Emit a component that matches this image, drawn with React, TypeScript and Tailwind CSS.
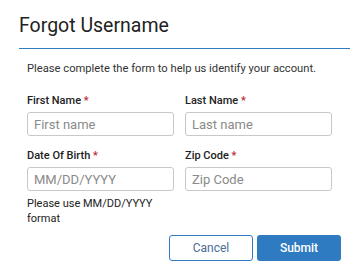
import React, { useState } from 'react';

const Label = ({ children }: { children: React.ReactNode }) => (
  <label className="block text-[11px] leading-[14px] font-medium text-[#222]">
    {children} <span className="text-[#b9282f]">*</span>
  </label>
);

const Field = ({
  label,
  placeholder,
  value,
  onChange,
}: {
  label: string;
  placeholder: string;
  value: string;
  onChange: (v: string) => void;
}) => (
  <div>
    <Label>{label}</Label>
    <input
      value={value}
      onChange={(e) => onChange(e.target.value)}
      placeholder={placeholder}
      className="mt-[4px] block h-[24px] w-full rounded-[3px] border border-[#c8c8c8] bg-white px-[6px] text-[13px] text-[#222] placeholder:text-[#8a8a8a] outline-none"
    />
  </div>
);

const App = () => {
  const [form, setForm] = useState({ firstName: '', lastName: '', dob: '', zip: '' });

  const set = (field: keyof typeof form) => (v: string) => setForm((prev) => ({ ...prev, [field]: v }));

  return (
    <div className="min-h-screen bg-white font-['Roboto',sans-serif] text-[#222]">
      {/* Header */}
      <div className="ml-[19px] mr-[14px] border-b border-[#2f7bc2] pt-[14px] pb-[10px]">
        <h1 className="text-[19.5px] leading-[24px] font-normal text-[#222]">Forgot Username</h1>
      </div>

      {/* Body */}
      <div className="pl-[27px] pr-[23px]">
        <p className="mt-[13px] text-[11.2px] leading-[14px] text-[#333]">
          Please complete the form to help us identify your account.
        </p>

        <div className="mt-[18px] grid grid-cols-[147px_147px] gap-x-[11px] gap-y-[13px]">
          <Field label="First Name" placeholder="First name" value={form.firstName} onChange={set('firstName')} />
          <Field label="Last Name" placeholder="Last name" value={form.lastName} onChange={set('lastName')} />
          <div>
            <Field label="Date Of Birth" placeholder="MM/DD/YYYY" value={form.dob} onChange={set('dob')} />
            <p className="mt-[6px] text-[11px] leading-[14.5px] text-[#222]">Please use MM/DD/YYYY format</p>
          </div>
          <Field label="Zip Code" placeholder="Zip Code" value={form.zip} onChange={set('zip')} />
        </div>

        {/* Actions */}
        <div className="mt-[9px] flex justify-end gap-[4px]">
          <button className="h-[26px] w-[84px] rounded-[3px] border border-[#2f7bc2] bg-white text-[12px] text-[#4a6e96]">
            Cancel
          </button>
          <button className="h-[26px] w-[84px] rounded-[3px] bg-[#2f7bc2] text-[12px] font-medium text-white">
            Submit
          </button>
        </div>
      </div>
    </div>
  );
};

export default App;
